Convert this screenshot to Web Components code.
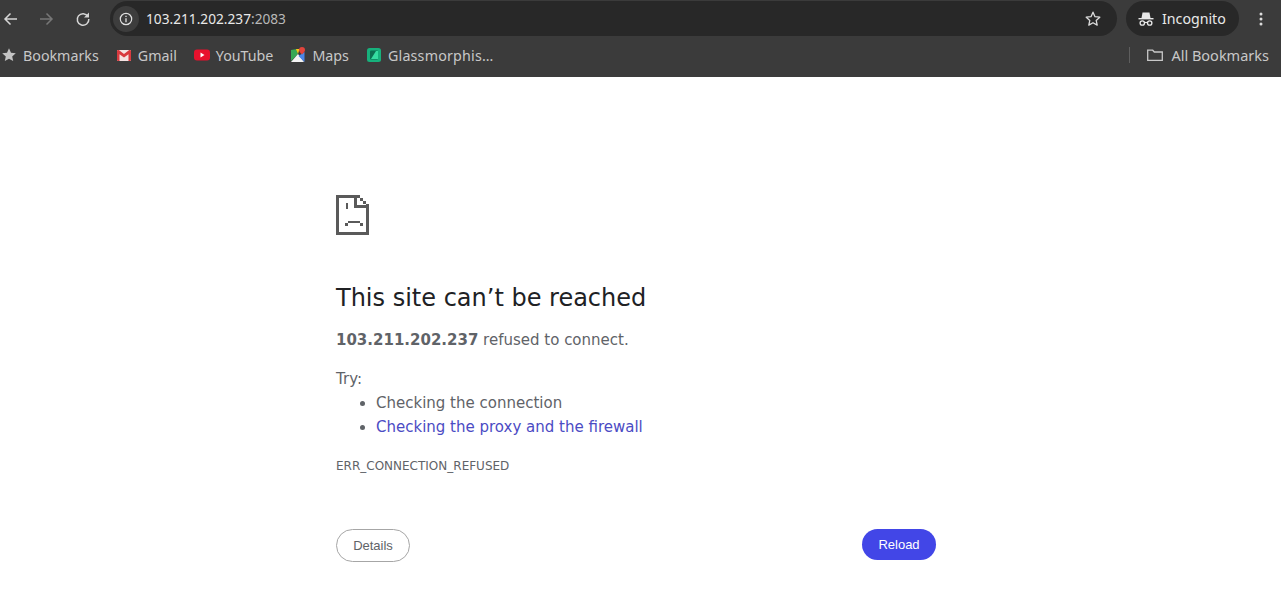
<!DOCTYPE html>
<html>
<head>
<meta charset="utf-8">
<title>103.211.202.237</title>
<style>
  html, body { margin: 0; padding: 0; background: #fff; }
  body { width: 1281px; height: 607px; overflow: hidden; }
</style>
</head>
<body>
<browser-toolbar></browser-toolbar>
<bookmarks-bar>
  <bookmark-item label="Bookmarks" icon="star"></bookmark-item>
  <bookmark-item label="Gmail" icon="gmail"></bookmark-item>
  <bookmark-item label="YouTube" icon="youtube"></bookmark-item>
  <bookmark-item label="Maps" icon="maps"></bookmark-item>
  <bookmark-item label="Glassmorphis…" icon="glass"></bookmark-item>
</bookmarks-bar>
<error-page></error-page>

<script>
const ICONS = {
  star: `<svg width="16" height="16" viewBox="0 0 16 16"><path fill="#c4c4c4" d="M8 1.300l2 4.400 4.800.5-3.600 3.200 1 4.700L8 11.700l-4.200 2.400 1-4.700L1.200 6.200 6 5.700z"/></svg>`,
  gmail: `<svg width="16" height="16" viewBox="0 0 16 16"><rect x="1" y="3" width="14" height="11" rx="1" fill="#f4e3e3"/><path fill="#d93a3f" d="M1 4c0-1 1-1.400 1.800-.9L8 7l5.200-3.900C14 2.600 15 3 15 4v9a1 1 0 0 1-1 1h-1.500V7.200L8 10.500 3.500 7.200V14H2a1 1 0 0 1-1-1z"/></svg>`,
  youtube: `<svg width="16" height="16" viewBox="0 0 16 16"><rect x="0" y="2.500" width="16" height="11" rx="3" fill="#e8112d"/><path fill="#fff" d="M6.500 5.500l4 2.500-4 2.500z"/></svg>`,
  maps: `<svg width="16" height="16" viewBox="0 0 16 16"><path fill="#36a853" d="M1 3l6-1 1 5-7 7z"/><path fill="#f4f4f4" d="M1 15l7-8 6 8z"/><path fill="#4a86e8" d="M8.500 9l6-4v10z"/><path fill="#f5c518" d="M6 2l3.500 0-1.500 5z"/><path fill="#e2453c" d="M12 0a3 3 0 0 1 3 3c0 2-3 4.500-3 4.500S9 5 9 3a3 3 0 0 1 3-3z"/></svg>`,
  glass: `<svg width="16" height="16" viewBox="0 0 16 16"><rect x="1" y="1" width="14" height="14" rx="2.500" fill="#17b17c"/><rect x="4" y="3.500" width="8" height="9" rx="1" fill="#0c6f50"/><path fill="#35dca0" d="M5 12l5-8h2v8z"/></svg>`
};

class BrowserToolbar extends HTMLElement {
  constructor() {
    super();
    this.attachShadow({ mode: "open" });
  }

  connectedCallback() {
    this.shadowRoot.innerHTML = `
    <style>
      :host { display: flex; align-items: center; height: 37px; box-sizing: border-box; background: #3b3b3b;
        font-family: "Noto Sans", "Open Sans", sans-serif; color: #e8e8e8; }
      .nav { display: flex; align-items: center; width: 110px; flex: none; padding-left: 2px; gap: 17px; box-sizing: border-box; }
      .nav svg { display: block; flex: none; }
      .nav svg:last-child { margin-left: 2px; }
      .omnibox { flex: none; width: 1007px; height: 35px; border-radius: 18px; background: #282828;
        display: flex; align-items: center; box-sizing: border-box; padding: 0 15px 0 3px; }
      .info { width: 26px; height: 26px; border-radius: 50%; background: #3d3d3d; display: flex; align-items: center; justify-content: center; flex: none; }
      .url { margin-left: 7px; font-size: 13.700px; flex: 1; }
      .url span { color: #b8b8b8; }
      .incognito { flex: none; margin-left: 9px; width: 113px; height: 35px; border-radius: 18px; background: #282828;
        display: flex; align-items: center; box-sizing: border-box; padding-left: 12px; gap: 8px; font-size: 14.200px; }
      .menu { flex: none; margin-left: 14px; }
    </style>
    <div class="nav">
      <svg width="18" height="18" viewBox="0 0 18 18"><path fill="none" stroke="#d6d6d6" stroke-width="1.500" d="M15 9H3.500M8.500 3.500L3 9l5.500 5.500"/></svg>
      <svg width="18" height="18" viewBox="0 0 18 18"><path fill="none" stroke="#777" stroke-width="1.500" d="M3 9h11.500M9.500 3.500L15 9l-5.500 5.500"/></svg>
      <svg width="18" height="18" viewBox="0 0 18 18"><path fill="none" stroke="#d6d6d6" stroke-width="1.500" d="M14 6.500A5.800 5.800 0 1 0 14.800 9"/><path fill="#d6d6d6" d="M15 2.500V7.500H10z"/></svg>
    </div>
    <div class="omnibox">
      <div class="info"><svg width="14" height="14" viewBox="0 0 14 14"><circle cx="7" cy="7" r="5.700" fill="none" stroke="#e0e0e0" stroke-width="1.200"/><path stroke="#e0e0e0" stroke-width="1.300" d="M7 6.200V10.200M7 3.700V5"/></svg></div>
      <div class="url">103.211.202.237<span>:2083</span></div>
      <svg width="18" height="18" viewBox="0 0 18 18"><path fill="none" stroke="#dcdcdc" stroke-width="1.300" stroke-linejoin="round" d="M9 2.200l2 4.500 4.800.5-3.600 3.200 1 4.700L9 12.700l-4.200 2.400 1-4.700L2.200 7.200 7 6.700z"/></svg>
    </div>
    <div class="incognito">
      <svg width="16" height="16" viewBox="0 0 16 16"><path fill="#e8e8e8" d="M4.500 1.500h7l1 5.500h-9z"/><path fill="#e8e8e8" d="M.5 7h15v1.400H.5z"/><circle cx="4.300" cy="12" r="2.200" fill="none" stroke="#e8e8e8" stroke-width="1.300"/><circle cx="11.700" cy="12" r="2.200" fill="none" stroke="#e8e8e8" stroke-width="1.300"/><path stroke="#e8e8e8" stroke-width="1.200" d="M6.500 11.500h3"/></svg>
      <span>Incognito</span>
    </div>
    <svg class="menu" width="16" height="18" viewBox="0 0 16 18"><circle cx="8" cy="4" r="1.500" fill="#dcdcdc"/><circle cx="8" cy="9" r="1.500" fill="#dcdcdc"/><circle cx="8" cy="14" r="1.500" fill="#dcdcdc"/></svg>
    `;
  }
}

class BookmarksBar extends HTMLElement {
  constructor() {
    super();
    this.attachShadow({ mode: "open" });
  }

  connectedCallback() {
    this.shadowRoot.innerHTML = `
    <style>
      :host { display: flex; align-items: center; height: 40px; box-sizing: border-box; background: #3b3b3b; padding: 0 12px 4px 1px;
        font-family: "Noto Sans", "Open Sans", sans-serif; font-size: 14.250px; color: #c8c8c8; }
      .items { display: flex; align-items: center; gap: 17px; flex: 1; }
      .sep { width: 1px; height: 16px; background: #5e5e5e; flex: none; }
      .all { display: flex; align-items: center; gap: 7px; margin-left: 16px; font-size: 14.500px; }
      svg { display: block; }
    </style>
    <div class="items"><slot></slot></div>
    <div class="sep"></div>
    <div class="all">
      <svg width="18" height="16" viewBox="0 0 18 16"><path fill="none" stroke="#c8c8c8" stroke-width="1.300" d="M1.700 3.200h5l1.600 1.800h8v8.300H1.700z"/></svg>
      <span>All Bookmarks</span>
    </div>
    `;
  }
}

class BookmarkItem extends HTMLElement {
  constructor() {
    super();
    this.attachShadow({ mode: "open" });
  }

  connectedCallback() {
    const name = this.getAttribute("icon");
    this.shadowRoot.innerHTML = `
    <style>
      :host { display: inline-flex; align-items: center; gap: 6px; white-space: nowrap; }
      :host([icon="glass"]) { letter-spacing: .2px; }
      svg { display: block; flex: none; }
    </style>
    ${ICONS[name]}<span>${this.getAttribute("label")}</span>
    `;
  }
}

class PillButton extends HTMLElement {
  constructor() {
    super();
    this.attachShadow({ mode: "open" });
  }

  connectedCallback() {
    this.shadowRoot.innerHTML = `
    <style>
      :host { display: inline-flex; align-items: center; justify-content: center; box-sizing: border-box; height: 31px; width: 74px;
        border-radius: 16px; font-family: "Liberation Sans", Arial, sans-serif; font-size: 13px; }
      :host([kind="primary"]) { background: #4246e7; color: #fff; }
      :host([kind="outline"]) { background: #fff; color: #5f6368; border: 1px solid #a6a6a6; height: 33px; border-radius: 17px; }
    </style>
    <slot></slot>
    `;
  }
}

class ErrorPage extends HTMLElement {
  constructor() {
    super();
    this.attachShadow({ mode: "open" });
  }

  connectedCallback() {
    this.shadowRoot.innerHTML = `
    <style>
      :host { display: block; width: 600px; margin-left: 336px; padding-top: 118px;
        font-family: "DejaVu Sans", sans-serif; font-size: 15px; color: #5f6368; }
      .icon { display: block; }
      h1 { margin: 46px 0 0; font-size: 24px; font-weight: 400; line-height: 34px; color: #202124; }
      p { margin: 0; }
      .msg { margin-top: 15px; line-height: 20px; }
      .msg b { font-weight: 700; }
      .try { margin-top: 19px; line-height: 20px; }
      ul { margin: 2px 0 0; padding: 0 0 0 40px; line-height: 24px; }
      a { color: #4b4bc4; text-decoration: none; }
      .code { margin-top: 19px; font-size: 12px; line-height: 16px; }
      .buttons { display: flex; justify-content: space-between; align-items: flex-start; margin-top: 55px; }
    </style>
    <svg class="icon" width="33" height="40" viewBox="0 0 33 40" shape-rendering="crispEdges">
      <path fill="#5a5a5a" fill-rule="evenodd" d="M0 0H24V3H27V6H30V9H33V40H0ZM3 3V37H30V13H18V3ZM21 3V10H30V9H27V6H24V3Z"/>
      <path fill="#5a5a5a" d="M10 8h2v6h-2zM12 26h12v2H12zM9 28h3v3H9zM24 28h3v3h-3z"/>
    </svg>
    <h1>This site can’t be reached</h1>
    <p class="msg"><b>103.211.202.237</b> refused to connect.</p>
    <p class="try">Try:</p>
    <ul>
      <li>Checking the connection</li>
      <li><a href="#">Checking the proxy and the firewall</a></li>
    </ul>
    <div class="code">ERR_CONNECTION_REFUSED</div>
    <div class="buttons">
      <pill-button kind="outline">Details</pill-button>
      <pill-button kind="primary">Reload</pill-button>
    </div>
    `;
  }
}

customElements.define("browser-toolbar", BrowserToolbar);
customElements.define("bookmarks-bar", BookmarksBar);
customElements.define("bookmark-item", BookmarkItem);
customElements.define("pill-button", PillButton);
customElements.define("error-page", ErrorPage);
</script>
</body>
</html>
